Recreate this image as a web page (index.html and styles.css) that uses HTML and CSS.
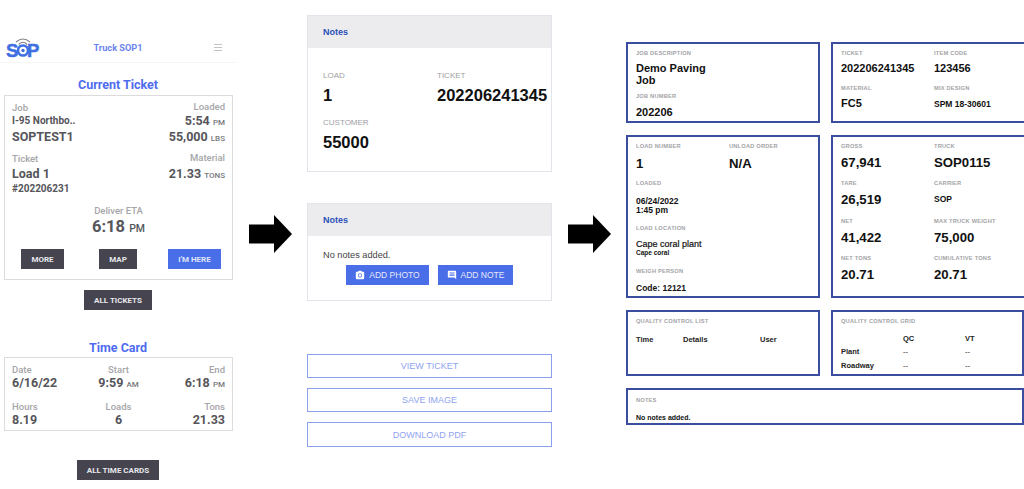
FILE: index.html
```html
<!DOCTYPE html>
<html lang="en">
<head>
<meta charset="utf-8">
<title>SOP ticket</title>
<link rel="stylesheet" href="styles.css">
</head>
<body>
<div class="page">
  <section class="phone">
    <header class="topbar">
      <svg class="logo" viewBox="0 0 34 28" width="34" height="28" aria-hidden="true">
        <path d="M10 10 Q17 4 24 10" fill="none" stroke="#85858c" stroke-width="1.200"/>
        <path d="M12.800 12.500 Q17 8 21.200 12.500" fill="none" stroke="#85858c" stroke-width="1.200"/>
        <text x="0" y="25" class="logo-s">S</text>
        <text x="21" y="25" class="logo-s">P</text>
        <circle cx="17" cy="18.500" r="5" fill="#fff" stroke="#3f6fe0" stroke-width="2.600"/>
        <circle cx="17" cy="18.500" r="1.700" fill="#3f6fe0"/>
      </svg>
      <span class="truck">Truck SOP1</span>
      <svg class="burger" viewBox="0 0 8 7" width="8" height="7" aria-hidden="true"><path d="M0 .5h8M0 3.500h8M0 6.500h8" stroke="#c4c4c8" stroke-width="1"/></svg>
    </header>
    <h2 class="ptitle first">Current Ticket</h2>
    <div class="pcard ticket">
      <div class="trow">
        <div class="tl">
          <div class="lab">Job</div>
          <div class="v13">I-95 Northbo..</div>
          <div class="v15">SOPTEST1</div>
        </div>
        <div class="tr">
          <div class="lab up">Loaded</div>
          <div class="v15 short">5:54 <small>PM</small></div>
          <div class="v15">55,000 <small>LBS</small></div>
        </div>
      </div>
      <div class="trow second">
        <div class="tl">
          <div class="lab">Ticket</div>
          <div class="v15">Load 1</div>
          <div class="v13">#202206231</div>
        </div>
        <div class="tr">
          <div class="lab up">Material</div>
          <div class="v15">21.33 <small>TONS</small></div>
        </div>
      </div>
      <div class="eta">
        <div class="lab">Deliver ETA</div>
        <div class="etav">6:18 <small>PM</small></div>
      </div>
      <div class="tbtns">
        <span class="btn dark bmore">MORE</span>
        <span class="btn dark bmap">MAP</span>
        <span class="btn blue bhere">I'M HERE</span>
      </div>
    </div>
    <span class="btn dark wide1">ALL TICKETS</span>
    <h2 class="ptitle second-title">Time Card</h2>
    <div class="pcard tc">
      <div class="tcc left"><div class="lab">Date</div><div class="v15 short">6/16/22</div></div>
      <div class="tcc mid"><div class="lab">Start</div><div class="v15 short">9:59 <small>AM</small></div></div>
      <div class="tcc right"><div class="lab">End</div><div class="v15 short">6:18 <small>PM</small></div></div>
      <div class="tcc left"><div class="lab">Hours</div><div class="v15 short">8.19</div></div>
      <div class="tcc mid"><div class="lab">Loads</div><div class="v15 short">6</div></div>
      <div class="tcc right"><div class="lab">Tons</div><div class="v15 short">21.33</div></div>
    </div>
    <span class="btn dark wide2">ALL TIME CARDS</span>
  </section>

  <div class="arrow-col">
    <svg viewBox="0 0 43 38" width="43" height="38" aria-hidden="true"><path d="M0 9.500h25V0l18 19-18 19V28.500H0z" fill="#000"/></svg>
  </div>

  <section class="middle">
    <div class="mcard c1">
      <div class="mhead">Notes</div>
      <div class="mbody grid2">
        <div><div class="mlab">LOAD</div><div class="mval">1</div></div>
        <div><div class="mlab">TICKET</div><div class="mval">202206241345</div></div>
        <div><div class="mlab">CUSTOMER</div><div class="mval">55000</div></div>
      </div>
    </div>
    <div class="mcard c2">
      <div class="mhead">Notes</div>
      <div class="mbody2">
        <div class="nonotes">No notes added.</div>
        <div class="addrow">
          <span class="addbtn photo"><svg viewBox="0 0 24 24" width="10" height="10" aria-hidden="true"><circle cx="12" cy="13" r="3.200" fill="#fff"/><path d="M9 2 7.200 4H4a2 2 0 0 0-2 2v14a2 2 0 0 0 2 2h16a2 2 0 0 0 2-2V6a2 2 0 0 0-2-2h-3.200L15 2zm3 16a5 5 0 1 1 0-10 5 5 0 0 1 0 10z" fill="#fff"/></svg>ADD PHOTO</span>
          <span class="addbtn note"><svg viewBox="0 0 24 24" width="10" height="10" aria-hidden="true"><path d="M22 4a2 2 0 0 0-2-2H4a2 2 0 0 0-2 2v12a2 2 0 0 0 2 2h14l4 4zM18 14H6v-2h12zm0-3H6V9h12zm0-3H6V6h12z" fill="#fff"/></svg>ADD NOTE</span>
        </div>
      </div>
    </div>
    <div class="outlines">
      <span class="obtn">VIEW TICKET</span>
      <span class="obtn">SAVE IMAGE</span>
      <span class="obtn">DOWNLOAD PDF</span>
    </div>
  </section>

  <div class="arrow-col a2">
    <svg viewBox="0 0 43 38" width="43" height="38" aria-hidden="true"><path d="M0 9.500h25V0l18 19-18 19V28.500H0z" fill="#000"/></svg>
  </div>

  <section class="ticketdoc">
    <div class="box b-job">
      <div class="rl">JOB DESCRIPTION</div>
      <div class="rv jobname">Demo Paving<br>Job</div>
      <div class="rl mt7">JOB NUMBER</div>
      <div class="rv mid-v">202206</div>
    </div>
    <div class="box b-tick two">
      <div><div class="rl">TICKET</div><div class="rv mid-v">202206241345</div></div>
      <div><div class="rl">ITEM CODE</div><div class="rv mid-v">123456</div></div>
      <div><div class="rl">MATERIAL</div><div class="rv mid-v">FC5</div></div>
      <div><div class="rl">MIX DESIGN</div><div class="rv sm-v">SPM 18-30601</div></div>
    </div>
    <div class="box b-load">
      <div class="two">
        <div><div class="rl">LOAD NUMBER</div><div class="rv big">1</div></div>
        <div><div class="rl">UNLOAD ORDER</div><div class="rv big">N/A</div></div>
      </div>
      <div class="rl mt9">LOADED</div>
      <div class="rv date">06/24/2022<br>1:45 pm</div>
      <div class="rl mt11">LOAD LOCATION</div>
      <div class="rv loc">Cape coral plant</div>
      <div class="rv locsub">Cape coral</div>
      <div class="rl mt11">WEIGH PERSON</div>
      <div class="rv code">Code: 12121</div>
    </div>
    <div class="box b-gross two gross">
      <div><div class="rl">GROSS</div><div class="rv big">67,941</div></div>
      <div><div class="rl">TRUCK</div><div class="rv big">SOP0115</div></div>
      <div><div class="rl">TARE</div><div class="rv big">26,519</div></div>
      <div><div class="rl">CARRIER</div><div class="rv sm-v sop">SOP</div></div>
      <div><div class="rl">NET</div><div class="rv big">41,422</div></div>
      <div><div class="rl">MAX TRUCK WEIGHT</div><div class="rv big">75,000</div></div>
      <div><div class="rl">NET TONS</div><div class="rv big">20.71</div></div>
      <div><div class="rl">CUMULATIVE TONS</div><div class="rv big">20.71</div></div>
    </div>
    <div class="box b-qcl">
      <div class="rl">QUALITY CONTROL LIST</div>
      <div class="qcl-row"><span>Time</span><span>Details</span><span>User</span></div>
    </div>
    <div class="box b-qcg">
      <div class="rl">QUALITY CONTROL GRID</div>
      <div class="qcg">
        <span></span><span>QC</span><span>VT</span>
        <span>Plant</span><span class="dash">--</span><span class="dash">--</span>
        <span>Roadway</span><span class="dash">--</span><span class="dash">--</span>
      </div>
    </div>
    <div class="box b-notes">
      <div class="rl">NOTES</div>
      <div class="rv nn">No notes added.</div>
    </div>
  </section>
</div>
</body>
</html>
```
FILE: styles.css
```css
* { box-sizing: border-box; }
html, body { margin: 0; padding: 0; background: #fff; overflow: hidden; }
.page { width: 1024px; height: 489px; display: flex; align-items: flex-start; overflow: hidden; }

/* left: phone */
.phone { width: 236px; padding-top: 30px; display: flex; flex-direction: column; align-items: center; font-family: Roboto, sans-serif; flex: none; }
.topbar { width: 236px; height: 33px; display: flex; align-items: center; justify-content: space-between; padding: 0 14px 0 6px; border-bottom: 1px solid #f6f6f6; }
.logo { overflow: visible; flex: none; }
.logo-s { font: 700 18.500px "Liberation Sans", sans-serif; fill: #3f6fe0; stroke: #3f6fe0; stroke-width: .5px; }
.truck { color: #6a84ee; font-size: 9.200px; font-weight: 700; flex: 1; text-align: center; margin-right: 18px; margin-top: 3px; }
.burger { margin-top: 3px; flex: none; }
.ptitle { margin: 0; color: #4f6cf0; font-size: 12.500px; line-height: 16px; font-weight: 700; text-align: center; }
.ptitle.first { margin-top: 14px; }
.ptitle.second-title { margin-top: 30px; }
.pcard { width: 229px; border: 1px solid #dcdcde; margin-top: 2px; margin-left: 1px; background: #fff; }
.ticket { height: 185px; padding: 6px 7px 0; display: flex; flex-direction: column; }
.trow { display: flex; justify-content: space-between; }
.trow.second { margin-top: 8px; }
.tr { text-align: right; }
.lab { color: #a5a5a8; font-size: 9.500px; font-weight: 500; line-height: 12px; }
.lab.up { margin-top: -1px; margin-bottom: 1px; }
.v13 { color: #55555a; font-size: 10px; font-weight: 700; line-height: 14px; }
.v15 { color: #55555a; font-size: 12.500px; font-weight: 700; line-height: 17px; }
.v15.short { line-height: 14px; }
.v15 small { color: #77777b; font-size: 8px; font-weight: 500; line-height: 0; }
.eta { text-align: center; margin-top: 9px; }
.etav { color: #55555a; font-size: 16.500px; font-weight: 700; line-height: 19px; }
.etav small { font-size: 10.500px; font-weight: 500; line-height: 0; }
.tbtns { display: flex; margin-top: 13px; padding-left: 9px; }
.btn { display: flex; align-items: center; justify-content: center; font-size: 8px; font-weight: 700; height: 20px; color: #e8e8ec; flex: none; }
.dark { background: #45444f; }
.blue { background: #4a6ee8; color: #dfe5fb; }
.bmore { width: 43px; }
.bmap { width: 38px; margin-left: 35px; }
.bhere { width: 53px; margin-left: 31px; }
.wide1 { width: 68px; margin-top: 10px; }
.wide2 { width: 82px; margin-top: 29px; }
.tc { height: 74px; margin-top: 1px; padding: 6px 7px 0; display: grid; grid-template-columns: 1fr 1fr 1fr; grid-auto-rows: 37px; }
.tcc.mid { text-align: center; }
.tcc.right { text-align: right; }

/* arrows */
.arrow-col { flex: none; width: 43px; margin: 215px 0 0 13px; line-height: 0; }
.a2 { margin-left: 16px; }

/* middle */
.middle { flex: none; width: 245px; margin-left: 15px; padding-top: 15px; font-family: "Liberation Sans", Arial, sans-serif; }
.mcard { border: 1px solid #e3e3ec; background: #fff; }
.c1 { height: 157px; }
.c2 { height: 98px; margin-top: 31px; }
.mhead { height: 32px; background: #ececee; color: #2b50b8; font-size: 9px; font-weight: 700; padding-left: 15px; line-height: 32px; }
.grid2 { display: grid; grid-template-columns: 114px 1fr; padding: 23px 0 0 15px; grid-auto-rows: 47px; }
.mlab { color: #a0a0a4; font-size: 8px; line-height: 10px; margin-bottom: 5px; }
.mval { color: #111; font-size: 16.500px; font-weight: 700; line-height: 18px; white-space: nowrap; }
.mbody2 { padding-top: 13px; }
.nonotes { color: #444; font-size: 9.200px; line-height: 12px; padding-left: 15px; }
.addrow { display: flex; margin: 4px 0 0 38px; gap: 9px; }
.addbtn { display: flex; align-items: center; justify-content: center; gap: 4px; height: 20px; background: #4a6ee8; color: #e4e9fc; font-size: 8.500px; }
.photo { width: 83px; }
.note { width: 75px; }
.outlines { margin-top: 53px; display: flex; flex-direction: column; gap: 10px; }
.obtn { height: 24px; border: 1px solid #8aa0ee; color: #8fa3f2; font-size: 9px; display: flex; align-items: center; justify-content: center; }
.outlines .obtn:last-child { height: 25px; }

/* right */
.ticketdoc { flex: none; width: 398px; margin-left: 15px; padding-top: 42px; display: grid; grid-template-columns: 194px 193px; column-gap: 11px; grid-template-rows: 81px 163px 66px 37px; row-gap: 12px; font-family: "Liberation Sans", Arial, sans-serif; }
.box { border: 2px solid #3a4d9f; padding: 6px 8px 0; overflow: hidden; min-width: 0; }
.b-gross, .b-tick { border-right-width: 0; }
.b-notes { grid-column: 1 / 3; padding-top: 7px; }
.two { display: grid; grid-template-columns: 93px 1fr; align-content: start; }
.rl { color: #a3a3a6; font-size: 5.700px; font-weight: 700; line-height: 7px; letter-spacing: .2px; white-space: nowrap; }
.rv { color: #111; font-weight: 700; }
.big { font-size: 13.200px; line-height: 14px; margin-top: 6px; }
.b-load .big { margin-top: 7px; }
.jobname { font-size: 11px; line-height: 12px; margin-top: 5px; }
.mid-v { font-size: 11px; line-height: 12px; margin-top: 6px; }
.b-tick .mid-v { margin-top: 5px; }
.sm-v { font-size: 8.500px; line-height: 12px; margin-top: 6px; }
.mt7 { margin-top: 7px; }
.mt9 { margin-top: 9px; }
.mt11 { margin-top: 11px; }
.b-tick > div { height: 35px; }
.date { font-size: 8.500px; line-height: 8.500px; margin-top: 10px; }
.loc { font-size: 9px; line-height: 10px; font-weight: 400; margin-top: 7px; -webkit-text-stroke: .2px #111; }
.locsub { font-size: 6.500px; line-height: 8px; }
.code { font-size: 8.500px; line-height: 10px; margin-top: 8px; }
.gross > div { height: 37.400px; }
.qcl-row { display: grid; grid-template-columns: 47px 77px 1fr; font-size: 7.500px; font-weight: 700; color: #222; margin-top: 10px; }
.qcg { display: grid; grid-template-columns: 62px 62px 1fr; grid-template-rows: 12px 14px 14px; font-size: 7.500px; font-weight: 700; color: #222; margin-top: 7px; align-items: center; }
.dash { color: #777; }
.nn { font-size: 7px; line-height: 8px; margin-top: 10px; }
```
